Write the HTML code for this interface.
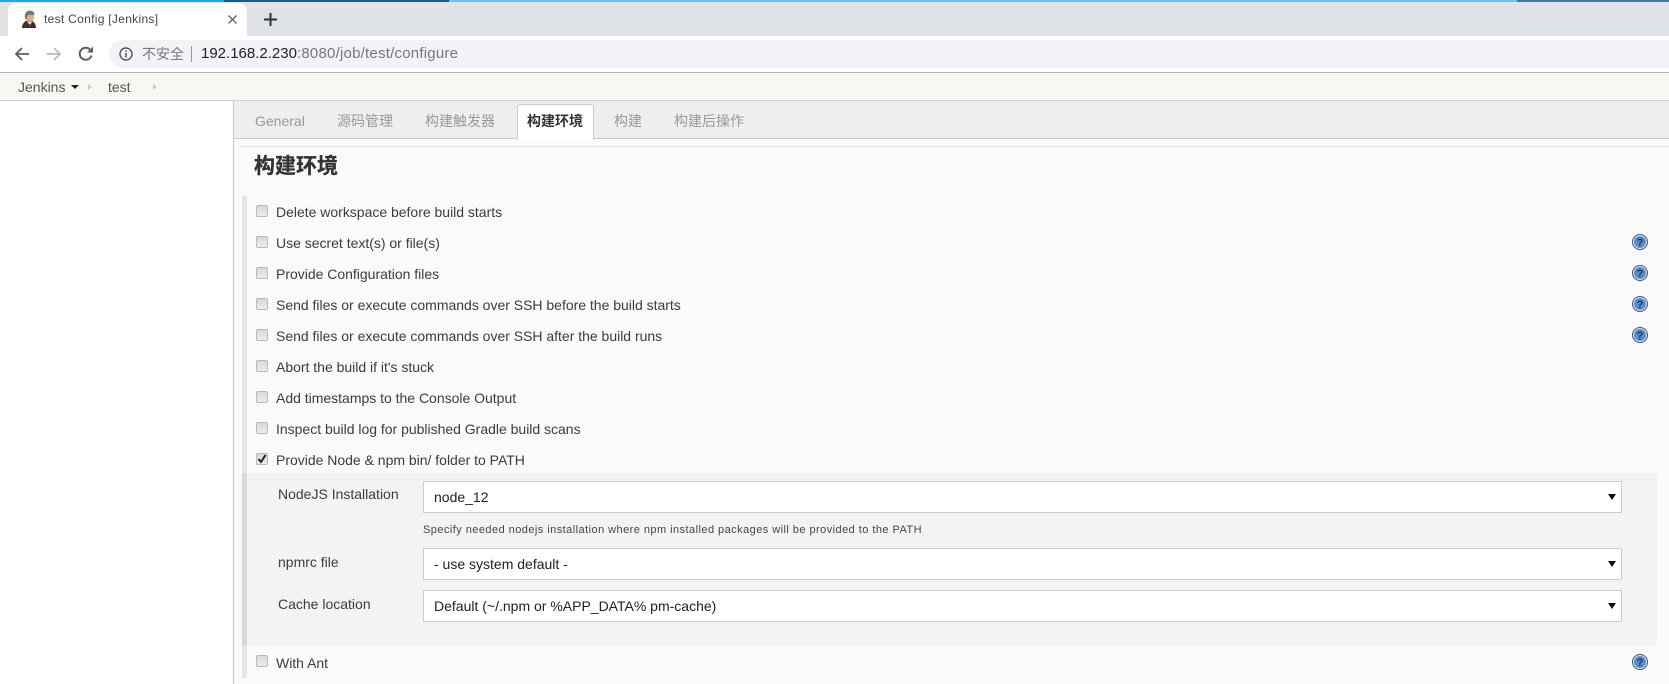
<!DOCTYPE html>
<html lang="zh"><head><meta charset="utf-8"><title>test Config [Jenkins]</title>
<style>
html,body{margin:0;padding:0;background:#fff}
body{position:relative;width:1669px;height:684px;overflow:hidden;font-family:"Liberation Sans","Noto Sans CJK SC",sans-serif;color:#333}
.a{position:absolute}
.t{position:absolute;white-space:nowrap;line-height:20px;height:20px}
.cb{position:absolute;left:256px;width:10px;height:10px;border:1px solid #b9b9b9;border-radius:2px;background:linear-gradient(#d8d8d8,#ececec)}
.lb{left:276px;font-size:14px;color:#3c3c3c;letter-spacing:-.01px}
.tab{font-size:14px;color:#999;top:111px}
.sel{position:absolute;left:423px;width:1197px;height:30px;background:#fff;border:1px solid #ccc}
.sel span{position:absolute;left:10px;top:5px;font-size:14px;line-height:20px;color:#222;white-space:nowrap}
.sel i{position:absolute;right:5px;top:12px;width:0;height:0;border-left:4px solid transparent;border-right:4px solid transparent;border-top:6px solid #111}
.fl{left:278px;font-size:14px;color:#3c3c3c}
.h{position:absolute;left:1632px}
</style></head><body>
<!-- tab strip -->
<div class="a" style="left:0;top:0;width:1669px;height:36px;background:#dee1e6"></div>
<div class="a" style="left:0;top:3px;width:1669px;height:6px;background:#e2e2ea"></div>
<div class="a" style="left:0;top:0;width:1669px;height:2px;background:#1ea7ea"></div>
<div class="a" style="left:224px;top:0;width:225px;height:2px;background:#0f5f8c"></div>
<div class="a" style="left:449px;top:0;width:1068px;height:2px;background:#63c6f2"></div>
<div class="a" style="left:1517px;top:0;width:152px;height:2px;background:#3d7fa3"></div>
<div class="a" style="left:8px;top:3px;width:239px;height:33px;background:#fff;border-radius:8px 8px 0 0"></div>
<svg class="a" style="left:21px;top:10px" width="16" height="18" viewBox="0 0 16 18"><path d="M1 18c0-4 2-6 4-7h6c2 1 4 3 4 7z" fill="#37322f"/><path d="M4 7c0-4 2-6 5-6s4 2 4 5-1 6-4 6-5-2-5-5z" fill="#d9b08c"/><path d="M4 8c-1-5 2-7.500 5-7.500s4.500 2 4.500 4.500c-3 0-6-1-7 1l-1 3z" fill="#7d746c"/><path d="M6 12l3 3 2-3z" fill="#ddd"/><path d="M8 14h1v3H8z" fill="#933"/></svg>
<div class="t" style="left:44px;top:9px;font-size:12px;color:#444;letter-spacing:.3px">test Config [Jenkins]</div>
<svg class="a" style="left:227px;top:14px" width="11" height="11" viewBox="0 0 11 11"><path d="M1.500 1.500l8 8M9.500 1.500l-8 8" stroke="#5f6368" stroke-width="1.300"/></svg>
<svg class="a" style="left:264px;top:13px" width="13" height="13" viewBox="0 0 13 13"><path d="M6.500 0v13M0 6.500h13" stroke="#333" stroke-width="2"/></svg>
<!-- toolbar -->
<div class="a" style="left:0;top:36px;width:1669px;height:36px;background:#fff"></div>
<div class="a" style="left:0;top:72px;width:1669px;height:1px;background:#b4b4b4"></div>
<div class="a" style="left:109px;top:40px;width:1560px;height:28px;background:#f2f3f6;border-radius:14px 0 0 14px"></div>
<svg class="a" style="left:14px;top:46px" width="16" height="16" viewBox="0 0 16 16"><path d="M15 8H2M8 2L2 8l6 6" fill="none" stroke="#5a5e63" stroke-width="1.800"/></svg>
<svg class="a" style="left:46px;top:46px" width="16" height="16" viewBox="0 0 16 16"><path d="M1 8h13M8 2l6 6-6 6" fill="none" stroke="#b9bbbe" stroke-width="1.800"/></svg>
<svg class="a" style="left:78px;top:46px" width="16" height="16" viewBox="0 0 16 16"><path d="M13.500 9.500A6 6 0 1 1 12 3.500" fill="none" stroke="#5a5e63" stroke-width="2"/><path d="M9 6.500h6v-6z" fill="#5a5e63"/></svg>
<svg class="a" style="left:119px;top:47px" width="14" height="14" viewBox="0 0 14 14"><circle cx="7" cy="7" r="6" fill="none" stroke="#555" stroke-width="1.400"/><path d="M7 6v4.500M7 3.400v1.500" stroke="#555" stroke-width="1.500"/></svg>
<div class="t" style="left:142px;top:44px;font-size:14px;color:#777">不安全</div>
<div class="a" style="left:191px;top:46px;width:1px;height:16px;background:#999"></div>
<div class="t" style="left:201px;top:44px;font-size:15px;color:#777"><span style="color:#222">192.168.2.230</span><span style="letter-spacing:.22px">:8080/job/test/configure</span></div>
<!-- breadcrumb -->
<div class="a" style="left:0;top:73px;width:1669px;height:27px;background:#f8f8f3"></div>
<div class="a" style="left:0;top:100px;width:1669px;height:1px;background:#cfcfcf"></div>
<div class="t" style="left:18px;top:77px;font-size:14px;color:#555">Jenkins</div>
<div class="a" style="left:71px;top:85px;border-left:4px solid transparent;border-right:4px solid transparent;border-top:4px solid #222"></div>
<div class="a" style="left:88px;top:84px;border-top:3.5px solid transparent;border-bottom:3.5px solid transparent;border-left:4px solid #ccc"></div>
<div class="t" style="left:108px;top:77px;font-size:14px;color:#555">test</div>
<div class="a" style="left:153px;top:84px;border-top:3.5px solid transparent;border-bottom:3.5px solid transparent;border-left:4px solid #ccc"></div>
<!-- main panel -->
<div class="a" style="left:233px;top:101px;width:1px;height:583px;background:#c8c8c8"></div>
<div class="a" style="left:234px;top:101px;width:1435px;height:583px;background:#fafafa"></div>
<div class="a" style="left:234px;top:101px;width:1435px;height:37px;background:#eeeeee"></div>
<div class="a" style="left:234px;top:138px;width:1435px;height:1px;background:#ccc"></div>
<div class="a" style="left:240px;top:146px;width:1429px;height:1px;background:#e2e2e2"></div>
<div class="a" style="left:517px;top:104px;width:75px;height:35px;background:#fff;border:1px solid #ccc;border-bottom:none;border-radius:3px 3px 0 0"></div>
<div class="t tab" style="left:255px">General</div>
<div class="t tab" style="left:337px">源码管理</div>
<div class="t tab" style="left:425px">构建触发器</div>
<div class="t tab" style="left:527px;color:#333;font-weight:bold">构建环境</div>
<div class="t tab" style="left:614px">构建</div>
<div class="t tab" style="left:674px">构建后操作</div>
<div class="t" style="left:254px;top:156px;font-size:21px;line-height:22px;height:22px;font-weight:bold;color:#333;-webkit-text-stroke:.3px #333">构建环境</div>
<!-- left bar -->
<div class="a" style="left:242px;top:196px;width:5px;height:482px;background:#e6e6e6"></div>
<div class="a" style="left:242px;top:473px;width:5px;height:173px;background:#d9d9d9"></div>
<div class="a" style="left:247px;top:473px;width:1410px;height:173px;background:#f3f3f3"></div>
<!-- rows -->
<div class="cb" style="top:205px"></div><div class="t lb" style="top:202px">Delete workspace before build starts</div>
<div class="cb" style="top:236px"></div><div class="t lb" style="top:233px">Use secret text(s) or file(s)</div>
<div class="cb" style="top:267px"></div><div class="t lb" style="top:264px">Provide Configuration files</div>
<div class="cb" style="top:298px"></div><div class="t lb" style="top:295px">Send files or execute commands over SSH before the build starts</div>
<div class="cb" style="top:329px"></div><div class="t lb" style="top:326px">Send files or execute commands over SSH after the build runs</div>
<div class="cb" style="top:360px"></div><div class="t lb" style="top:357px">Abort the build if it's stuck</div>
<div class="cb" style="top:391px"></div><div class="t lb" style="top:388px">Add timestamps to the Console Output</div>
<div class="cb" style="top:422px"></div><div class="t lb" style="top:419px">Inspect build log for published Gradle build scans</div>
<div class="cb" style="top:453px"></div><svg class="a" style="left:256px;top:453px" width="12" height="12" viewBox="0 0 12 12"><path d="M2.500 6l2.500 3 4.500-7" fill="none" stroke="#222" stroke-width="2"/></svg><div class="t lb" style="top:450px">Provide Node &amp; npm bin/ folder to PATH</div>
<div class="cb" style="top:655px"></div><div class="t lb" style="top:653px">With Ant</div>
<!-- nested form -->
<div class="t fl" style="top:484px">NodeJS Installation</div>
<div class="sel" style="top:481px"><span>node_12</span><i></i></div>
<div class="t" style="left:423px;top:520px;font-size:11px;color:#444;letter-spacing:.45px">Specify needed nodejs installation where npm installed packages will be provided to the PATH</div>
<div class="t fl" style="top:552px">npmrc file</div>
<div class="sel" style="top:548px"><span>- use system default -</span><i></i></div>
<div class="t fl" style="top:594px">Cache location</div>
<div class="sel" style="top:590px"><span>Default (~/.npm or %APP_DATA% pm-cache)</span><i></i></div>
<!-- help icons -->
<svg class="h" style="top:234px" width="16" height="16" viewBox="0 0 16 16"><circle cx="8" cy="8" r="7.500" fill="#dfe8f3" stroke="#2f5590"/><circle cx="8" cy="8" r="6" fill="#5f8bc3"/><text x="8" y="12" font-size="11" font-weight="bold" text-anchor="middle" fill="#17396f" font-family="Liberation Sans">?</text></svg>
<svg class="h" style="top:265px" width="16" height="16" viewBox="0 0 16 16"><circle cx="8" cy="8" r="7.500" fill="#dfe8f3" stroke="#2f5590"/><circle cx="8" cy="8" r="6" fill="#5f8bc3"/><text x="8" y="12" font-size="11" font-weight="bold" text-anchor="middle" fill="#17396f" font-family="Liberation Sans">?</text></svg>
<svg class="h" style="top:296px" width="16" height="16" viewBox="0 0 16 16"><circle cx="8" cy="8" r="7.500" fill="#dfe8f3" stroke="#2f5590"/><circle cx="8" cy="8" r="6" fill="#5f8bc3"/><text x="8" y="12" font-size="11" font-weight="bold" text-anchor="middle" fill="#17396f" font-family="Liberation Sans">?</text></svg>
<svg class="h" style="top:327px" width="16" height="16" viewBox="0 0 16 16"><circle cx="8" cy="8" r="7.500" fill="#dfe8f3" stroke="#2f5590"/><circle cx="8" cy="8" r="6" fill="#5f8bc3"/><text x="8" y="12" font-size="11" font-weight="bold" text-anchor="middle" fill="#17396f" font-family="Liberation Sans">?</text></svg>
<svg class="h" style="top:654px" width="16" height="16" viewBox="0 0 16 16"><circle cx="8" cy="8" r="7.500" fill="#dfe8f3" stroke="#2f5590"/><circle cx="8" cy="8" r="6" fill="#5f8bc3"/><text x="8" y="12" font-size="11" font-weight="bold" text-anchor="middle" fill="#17396f" font-family="Liberation Sans">?</text></svg>
</body></html>
